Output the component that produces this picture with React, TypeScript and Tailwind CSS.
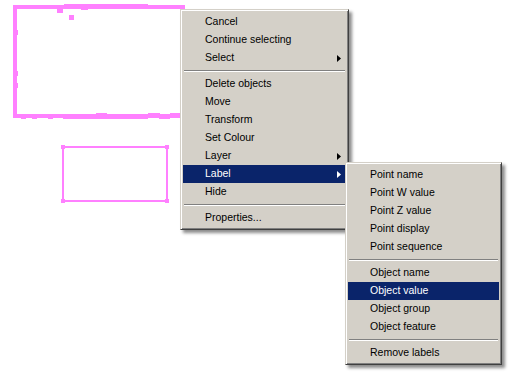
import React from 'react';

type Entry = { label?: string; sub?: boolean; active?: boolean; sep?: boolean };

const mainItems: Entry[] = [
  { label: 'Cancel' },
  { label: 'Continue selecting' },
  { label: 'Select', sub: true },
  { sep: true },
  { label: 'Delete objects' },
  { label: 'Move' },
  { label: 'Transform' },
  { label: 'Set Colour' },
  { label: 'Layer', sub: true },
  { label: 'Label', sub: true, active: true },
  { label: 'Hide' },
  { sep: true },
  { label: 'Properties...' },
];

const labelItems: Entry[] = [
  { label: 'Point name' },
  { label: 'Point W value' },
  { label: 'Point Z value' },
  { label: 'Point display' },
  { label: 'Point sequence' },
  { sep: true },
  { label: 'Object name' },
  { label: 'Object value', active: true },
  { label: 'Object group' },
  { label: 'Object feature' },
  { sep: true },
  { label: 'Remove labels' },
];

function Arrow({ white }: { white?: boolean }) {
  return (
    <svg width="4" height="7" viewBox="0 0 4 7" className="shrink-0">
      <path d="M0 0 L4 3.5 L0 7 Z" fill={white ? '#ffffff' : '#000000'} />
    </svg>
  );
}

function MenuList({ items }: { items: Entry[] }) {
  return (
    <>
      {items.map((it, i) =>
        it.sep ? (
          <div key={i} className="h-[8px] flex flex-col justify-center mx-[1px]">
            <div className="h-px bg-[#808080]" />
            <div className="h-px bg-white" />
          </div>
        ) : (
          <div
            key={i}
            className={`h-[18px] flex items-center pl-[22px] pr-[5px] ${
              it.active ? 'bg-[#0a246a] text-white' : 'text-black'
            }`}
          >
            <span className="flex-1 leading-[16px] pb-[2px]">{it.label}</span>
            {it.sub && <Arrow white={it.active} />}
          </div>
        )
      )}
    </>
  );
}

const frame =
  'absolute bg-[#d4d0c8] border border-t-[#d4d0c8] border-l-[#d4d0c8] border-r-[#404040] border-b-[#404040] shadow-[inset_1px_1px_0_#ffffff,inset_-1px_-1px_0_#808080,3px_3px_3px_rgba(0,0,0,0.45)]';

export default function App() {
  return (
    <div className="relative w-[510px] h-[373px] bg-white overflow-hidden text-[10.5px] font-['Liberation_Sans',Arial,sans-serif]">
      {/* drawing canvas */}
      <svg className="absolute inset-0" width="510" height="373" viewBox="0 0 510 373">
        <g fill="#ff80ff">
          {/* big rough rectangle */}
          <rect x="13" y="5" width="172" height="4" />
          <rect x="64" y="4" width="84" height="1" />
          <rect x="57" y="9" width="6" height="4" />
          <rect x="81" y="9" width="7" height="1" />
          <rect x="69" y="15" width="5" height="5" />
          <rect x="13" y="5" width="4" height="113" />
          <rect x="17" y="30" width="1" height="5" />
          <rect x="17" y="71" width="1" height="5" />
          <rect x="17" y="83" width="1" height="5" />
          <rect x="13" y="114" width="167" height="4" />
          <rect x="63" y="118" width="85" height="1" />
          <rect x="21" y="118" width="5" height="1" />
          <rect x="32" y="118" width="5" height="1" />
          <rect x="48" y="118" width="5" height="1" />
          <rect x="96" y="113" width="11" height="1" />
          <rect x="148" y="113" width="12" height="1" />
          <rect x="159" y="118" width="11" height="1" />
          <rect x="170" y="113" width="10" height="1" />
          {/* small selected rectangle */}
          <rect x="62" y="146" width="106" height="2" />
          <rect x="62" y="200" width="106" height="2" />
          <rect x="62" y="146" width="2" height="56" />
          <rect x="166" y="146" width="2" height="56" />
          <rect x="61" y="145" width="4" height="4" />
          <rect x="165" y="145" width="4" height="4" />
          <rect x="61" y="199" width="4" height="4" />
          <rect x="165" y="199" width="4" height="4" />
        </g>
      </svg>

      {/* context menu */}
      <div className={`${frame} left-[180px] top-[9px] w-[169px] pt-[3px] pb-[2px] px-[2px]`}>
        <MenuList items={mainItems} />
      </div>

      {/* Label submenu */}
      <div className={`${frame} left-[345px] top-[162px] w-[157px] pt-[3px] pb-[2px] px-[2px]`}>
        <MenuList items={labelItems} />
      </div>
    </div>
  );
}
